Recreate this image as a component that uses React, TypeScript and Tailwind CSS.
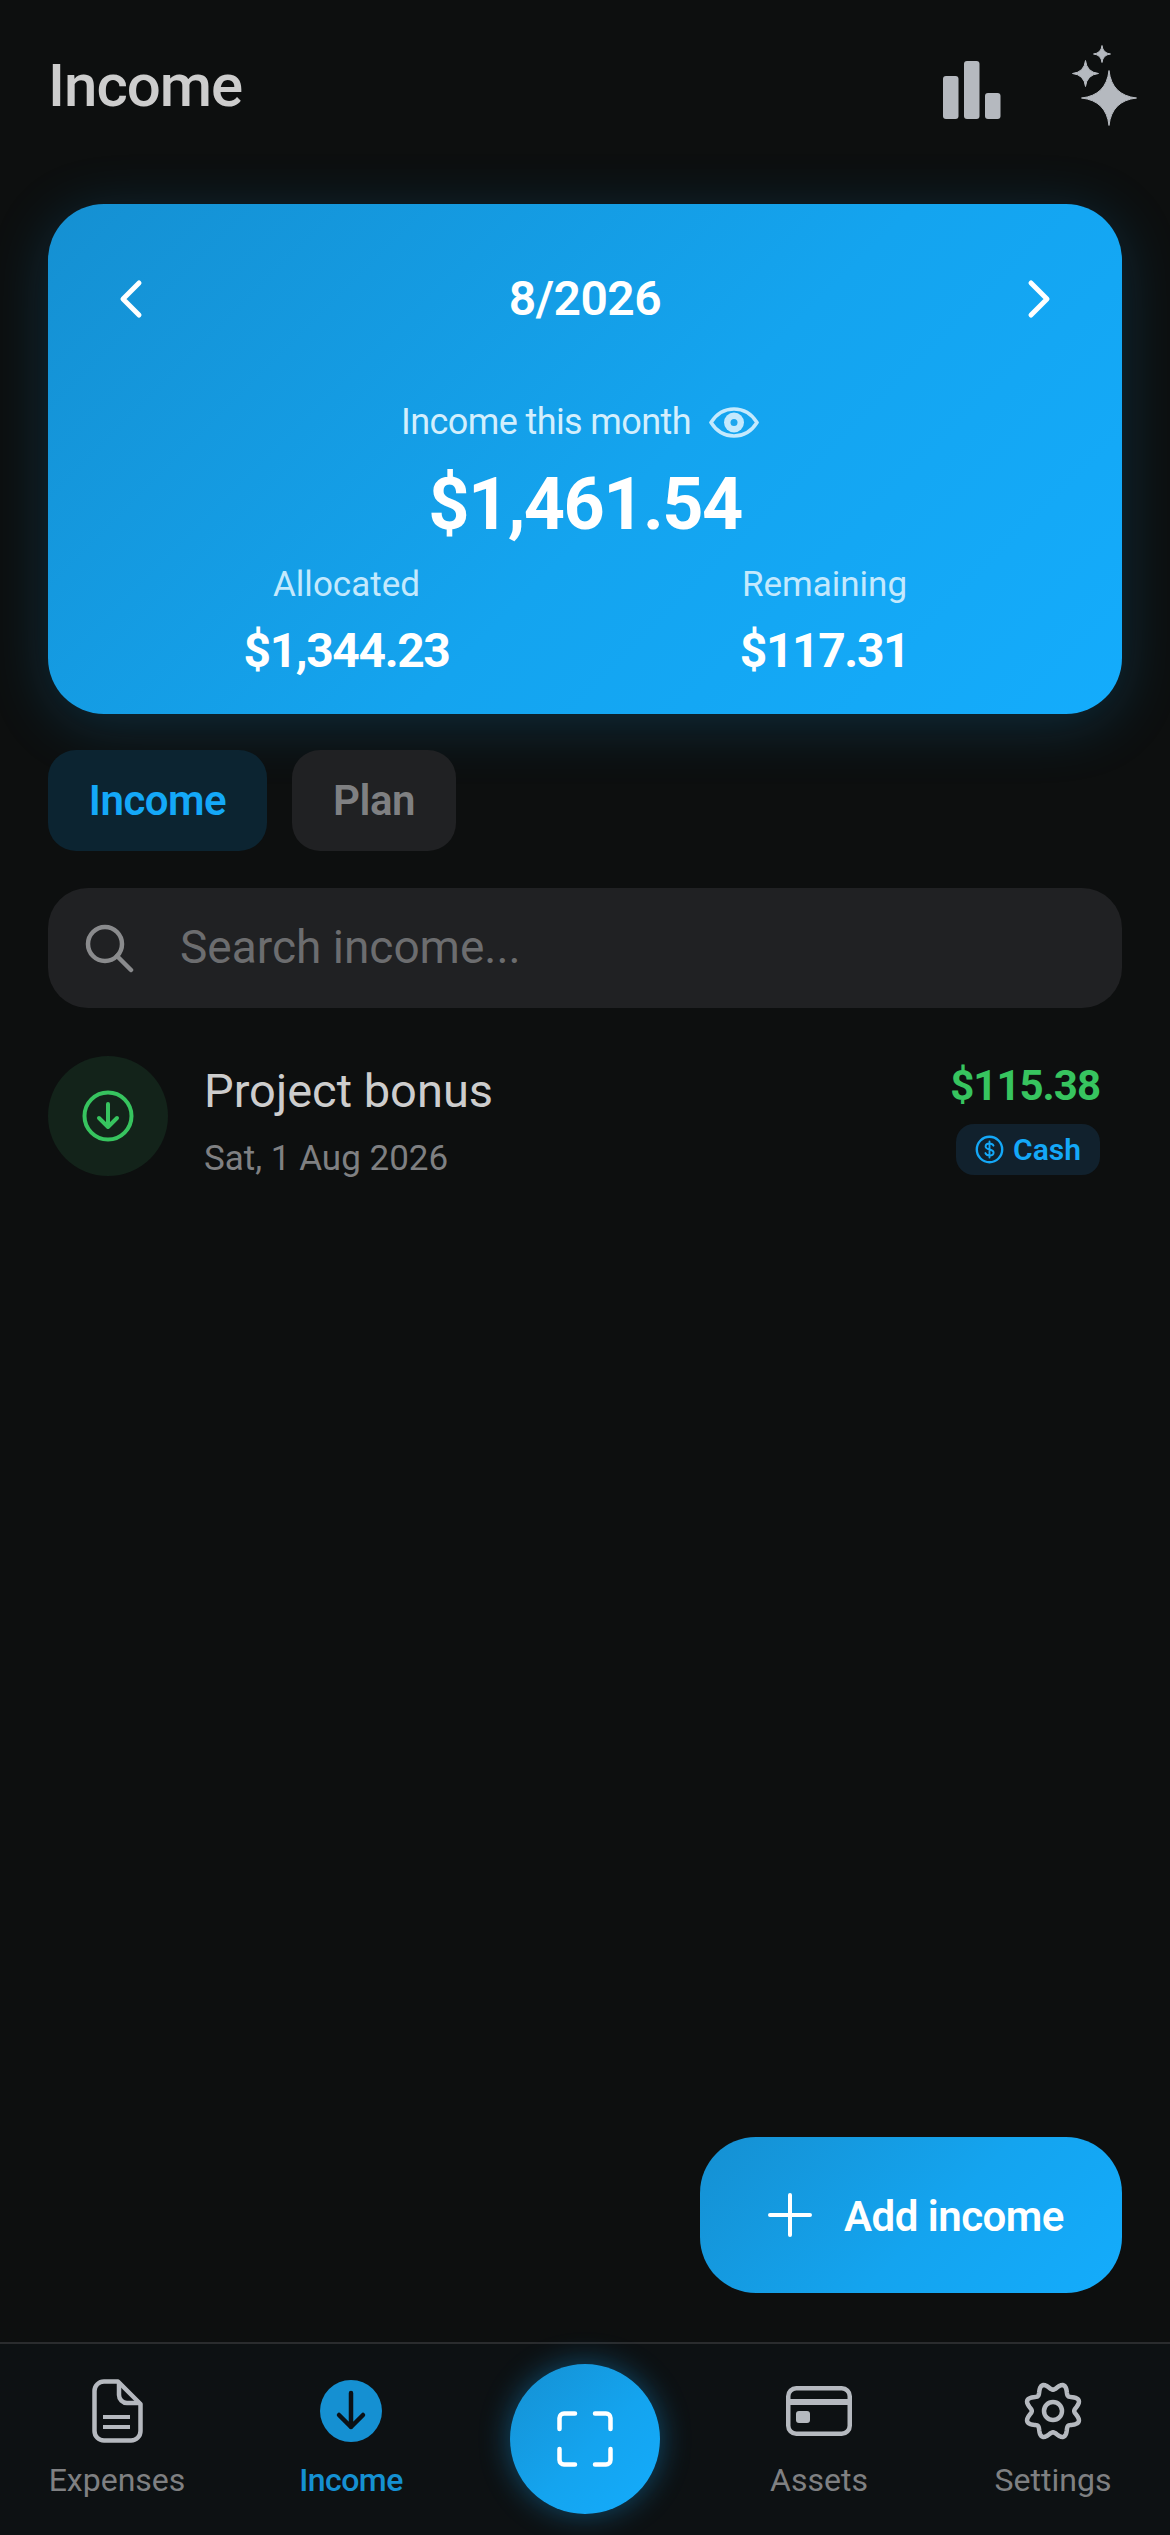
import React from "react";

const GRADIENT = "bg-[linear-gradient(135deg,#1590d2_0%,#14a4ef_55%,#14acfc_100%)]";

const BarsIcon = () => (
  <svg width="58" height="58" viewBox="0 0 58 58" fill="#b5b9bf">
    <rect x="0" y="15" width="15.5" height="43" rx="3" />
    <rect x="21" y="0" width="15.5" height="58" rx="3" />
    <rect x="42" y="32" width="15.5" height="26" rx="3" />
  </svg>
);

const star = (cx: number, cy: number, r: number) => {
  const c = r * 0.1;
  return `M${cx} ${cy - r}Q${cx + c} ${cy - c} ${cx + r} ${cy}Q${cx + c} ${cy + c} ${cx} ${cy + r}Q${cx - c} ${cy + c} ${cx - r} ${cy}Q${cx - c} ${cy - c} ${cx} ${cy - r}Z`;
};

const SparkleIcon = () => (
  <svg width="66" height="82" viewBox="0 0 66 82" fill="#b5b9bf" stroke="#b5b9bf" strokeWidth="1" strokeLinejoin="round">
    <path d={star(37, 53, 27.5)} />
    <path d={star(13.5, 28.5, 13)} />
    <path d={star(30, 9, 8.5)} />
  </svg>
);

const Chevron = ({ dir }: { dir: "left" | "right" }) => (
  <svg width="26" height="40" viewBox="0 0 26 40" fill="none" stroke="white" strokeWidth="5" strokeLinecap="round" strokeLinejoin="round">
    <path d={dir === "left" ? "M21 4 5 20l16 16" : "M5 4l16 16L5 36"} />
  </svg>
);

const EyeIcon = () => (
  <svg width="50" height="31" viewBox="0 0 50 31" fill="none">
    <path d="M2 15.500C8 6 16 2 25 2s17 4 23 13.500C42 25 34 29 25 29S8 25 2 15.500Z" stroke="#c4e9fd" strokeWidth="3.500" />
    <circle cx="25" cy="15.500" r="10" fill="#c4e9fd" />
    <circle cx="25" cy="15.500" r="3.500" fill="#1ca6ee" />
  </svg>
);

const SearchIcon = () => (
  <svg width="50" height="50" viewBox="0 0 50 50" fill="none" stroke="#8a8b8d" strokeWidth="4.500" strokeLinecap="round">
    <circle cx="21" cy="21" r="17" />
    <path d="m33 33 14 14" />
  </svg>
);

const DownCircleIcon = () => (
  <svg width="52" height="52" viewBox="0 0 52 52" fill="none" stroke="#37c45f" strokeWidth="4" strokeLinecap="round" strokeLinejoin="round">
    <circle cx="26" cy="26" r="23.500" />
    <path d="M26 14v23M17 28l9 9 9-9" />
  </svg>
);

const DollarBadgeIcon = () => (
  <svg width="29" height="29" viewBox="0 0 29 29" fill="none">
    <circle cx="14.500" cy="14.500" r="12.700" stroke="#14a8f8" strokeWidth="2.400" />
    <path d="M18.500 10.700c-.6-1.400-2-2.200-4-2.200-2.300 0-3.900 1.200-3.900 3 0 4 8 2 8 6 0 1.800-1.700 3-4 3-2.100 0-3.600-.9-4.200-2.400M14.500 6.500v16" stroke="#14a8f8" strokeWidth="1.900" strokeLinecap="round" />
  </svg>
);

const PlusIcon = () => (
  <svg width="44" height="44" viewBox="0 0 44 44" fill="none" stroke="white" strokeWidth="4" strokeLinecap="round">
    <path d="M22 2v40M2 22h40" />
  </svg>
);

const FileIcon = () => (
  <svg width="51" height="64" viewBox="0 0 51 64" fill="none" stroke="#b5b9bf" strokeWidth="4.500" strokeLinejoin="round">
    <path d="M12 2.500H26L48.500 25V52a9.500 9.500 0 0 1-9.500 9.500H12A9.500 9.500 0 0 1 2.500 52V12A9.500 9.500 0 0 1 12 2.500Z" />
    <path d="M27 3V16a8 8 0 0 0 8 8H48" />
    <path d="M11 38h27M11 48h27" strokeWidth="4" />
  </svg>
);

const NavDownIcon = () => (
  <div className="flex h-[62px] w-[62px] items-center justify-center rounded-full bg-[#1590d2]">
    <svg width="34" height="44" viewBox="0 0 34 44" fill="none" stroke="#0b1116" strokeWidth="4.500" strokeLinecap="round" strokeLinejoin="round">
      <path d="M17 4v34M5 26l12 12 12-12" />
    </svg>
  </div>
);

const CardIcon = () => (
  <svg width="66" height="50" viewBox="0 0 66 50" fill="none">
    <rect x="2.250" y="2.250" width="61.500" height="45.500" rx="8" stroke="#b5b9bf" strokeWidth="4.500" />
    <rect x="3" y="13" width="60" height="6" fill="#b5b9bf" />
    <rect x="10" y="25" width="14" height="12" rx="3" fill="#b5b9bf" />
  </svg>
);

// wavy eight-lobed outline, the teeth sit either side of the vertical axis
const gearPath = Array.from({ length: 144 }, (_, i) => {
  const a = (i / 144) * Math.PI * 2;
  const r = 24.500 + 3.300 * Math.cos(8 * (a - Math.PI / 8));
  return `${i === 0 ? "M" : "L"}${(30 + r * Math.sin(a)).toFixed(2)} ${(30 - r * Math.cos(a)).toFixed(2)}`;
}).join("") + "Z";

const GearIcon = () => (
  <svg width="60" height="60" viewBox="0 0 60 60" fill="none" stroke="#b5b9bf" strokeWidth="4.500" strokeLinejoin="round">
    <path d={gearPath} />
    <circle cx="30" cy="30" r="9" />
  </svg>
);

const ScanIcon = () => (
  <svg width="56" height="56" viewBox="0 0 56 56" fill="none" stroke="white" strokeWidth="4.500" strokeLinecap="round" strokeLinejoin="round">
    <path d="M2.500 18V7a4.500 4.500 0 0 1 4.500-4.500h11M38 2.500h11A4.500 4.500 0 0 1 53.500 7v11M53.500 38v11a4.500 4.500 0 0 1-4.500 4.500H38M18 53.500H7A4.500 4.500 0 0 1 2.500 49V38" />
  </svg>
);

const NavItem = ({ icon, label, active }: { icon: React.ReactNode; label: string; active?: boolean }) => (
  <div className="flex flex-col items-center">
    <div className="flex h-[66px] items-center justify-center">{icon}</div>
    <div className={active ? "mt-[14px] text-[32px] leading-[44px] font-medium tracking-[-0.5px] text-[#1590d2]" : "mt-[14px] text-[32px] leading-[44px] text-[#7f8082]"}>
      {label}
    </div>
  </div>
);

export default function App() {
  return (
    <div className="flex h-[2535px] w-[1170px] flex-col overflow-hidden bg-[#0d0f0f] font-['Roboto',sans-serif]">
      <header className="flex h-[204px] items-start justify-between pt-[45px] pr-[32px] pl-[48px]">
        <h1 className="mt-[8px] text-[60px] leading-[66px] font-medium tracking-[-1px] text-[#cdcdcd]">Income</h1>
        <div className="flex items-start gap-[71px]">
          <div className="mt-[16px]">
            <BarsIcon />
          </div>
          <SparkleIcon />
        </div>
      </header>

      <main className="flex flex-1 flex-col px-[48px]">
        <section className={`flex h-[510px] flex-col items-center rounded-[56px] pt-[65px] shadow-[0_10px_60px_rgba(20,150,225,0.22)] ${GRADIENT}`}>
          <div className="flex w-full items-center justify-between px-[70px]">
            <Chevron dir="left" />
            <div className="text-[48px] leading-[60px] font-semibold tracking-[-0.5px] text-white">8/2026</div>
            <Chevron dir="right" />
          </div>
          <div className="mt-[69px] mr-[10px] flex items-center gap-[18px]">
            <span className="text-[36px] leading-[48px] tracking-[-0.6px] text-[#d3effd]">Income this month</span>
            <EyeIcon />
          </div>
          <div className="mt-[17px] text-[72px] leading-[84px] font-bold tracking-[-1.6px] text-white">$1,461.54</div>
          <div className="mt-[16px] grid w-full grid-cols-2">
            <div className="flex flex-col items-center pl-[60px]">
              <span className="text-[35px] leading-[44px] text-[#c4e9fd]">Allocated</span>
              <span className="mt-[16px] text-[48px] leading-[56px] font-bold tracking-[-1.4px] text-white">$1,344.23</span>
            </div>
            <div className="flex flex-col items-center pr-[58px]">
              <span className="text-[35px] leading-[44px] text-[#c4e9fd]">Remaining</span>
              <span className="mt-[16px] text-[48px] leading-[56px] font-bold tracking-[-1.4px] text-white">$117.31</span>
            </div>
          </div>
        </section>

        <div className="mt-[36px] flex gap-[25px]">
          <div className="flex h-[101px] w-[219px] items-center justify-center rounded-[28px] bg-[#0c2431] text-[42px] font-semibold tracking-[-0.5px] text-[#14a8f8]">Income</div>
          <div className="flex h-[101px] w-[164px] items-center justify-center rounded-[28px] bg-[#202123] text-[42px] font-semibold tracking-[-0.5px] text-[#7f8082]">Plan</div>
        </div>

        <div className="mt-[37px] flex h-[120px] items-center gap-[46px] rounded-[40px] bg-[#202123] pl-[36px]">
          <SearchIcon />
          <span className="-mt-[2px] text-[46px] text-[#6c6d6f]">Search income...</span>
        </div>

        <div className="mt-[48px] flex pr-[22px]">
          <div className="flex h-[120px] w-[120px] items-center justify-center rounded-full bg-[#13231a]">
            <DownCircleIcon />
          </div>
          <div className="ml-[36px] flex flex-1 flex-col">
            <span className="mt-[7px] text-[47px] leading-[56px] text-[#cdcdcd]">Project bonus</span>
            <span className="mt-[18px] text-[35px] leading-[44px] text-[#7f8082]">Sat, 1 Aug 2026</span>
          </div>
          <div className="flex flex-col items-end">
            <span className="mt-[3px] text-[42px] leading-[54px] font-bold tracking-[-1px] text-[#37c45f]">$115.38</span>
            <div className="mt-[11px] flex h-[51px] items-center gap-[9px] rounded-[18px] bg-[#11212d] px-[19px] text-[30px] font-semibold text-[#14a8f8]">
              <DollarBadgeIcon />
              Cash
            </div>
          </div>
        </div>

        <div className={`mt-auto mb-[49px] flex h-[156px] w-[422px] items-center gap-[32px] self-end rounded-[56px] pl-[68px] ${GRADIENT}`}>
          <PlusIcon />
          <span className="mt-[2px] text-[42px] font-semibold tracking-[-0.5px] text-white">Add income</span>
        </div>
      </main>

      <nav className="grid h-[193px] grid-cols-5 border-t-[2px] border-[#2a2c2e] bg-[#0d1113] pt-[34px]">
        <NavItem icon={<FileIcon />} label="Expenses" />
        <NavItem icon={<NavDownIcon />} label="Income" active />
        <div className="flex justify-center">
          <div className={`-mt-[14px] flex h-[150px] w-[150px] items-center justify-center rounded-full shadow-[0_0_30px_rgba(20,150,225,0.45)] ${GRADIENT}`}>
            <ScanIcon />
          </div>
        </div>
        <NavItem icon={<CardIcon />} label="Assets" />
        <NavItem icon={<GearIcon />} label="Settings" />
      </nav>
    </div>
  );
}
